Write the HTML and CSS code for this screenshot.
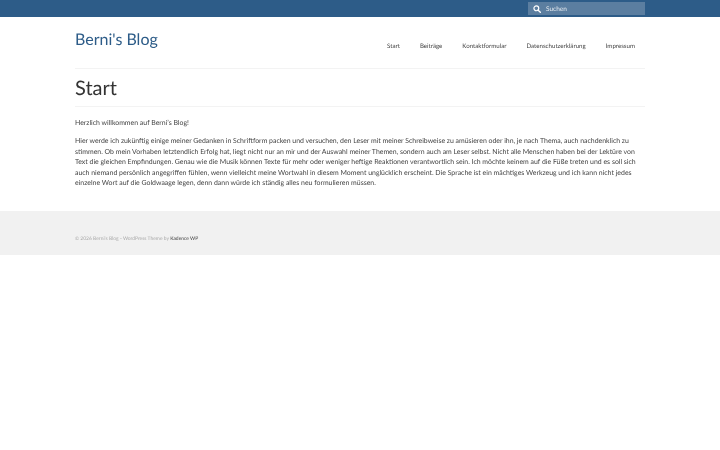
FILE: index.html
```html
<!DOCTYPE html>
<html lang="de">
<head>
<meta charset="utf-8">
<title>Berni's Blog</title>
<link rel="stylesheet" href="styles.css">
</head>
<body>
<div class="topbar">
  <div class="container topbar-inner">
    <form class="search">
      <svg class="search-icon" viewBox="0 0 12 12" width="8" height="8"><circle cx="5" cy="5" r="3.6" fill="none" stroke="#fff" stroke-width="1.8"/><path d="M7.8 7.8 11 11" stroke="#fff" stroke-width="2" stroke-linecap="round"/></svg>
      <span class="search-text">Suchen</span>
    </form>
  </div>
</div>
<header class="header">
  <div class="container header-inner">
    <a class="brand">Berni's Blog</a>
    <nav class="nav">
      <a>Start</a><a>Beiträge</a><a>Kontaktformular</a><a>Datenschutzerklärung</a><a>Impressum</a>
    </nav>
  </div>
</header>
<main class="container">
  <div class="title-wrap"><h1>Start</h1></div>
  <p>Herzlich willkommen auf Berni’s Blog!</p>
  <p>Hier werde ich zukünftig einige meiner Gedanken in Schriftform packen und versuchen, den Leser mit meiner Schreibweise zu amüsieren oder ihn, je nach Thema, auch nachdenklich zu stimmen. Ob mein Vorhaben letztendlich Erfolg hat, liegt nicht nur an mir und der Auswahl meiner Themen, sondern auch am Leser selbst. Nicht alle Menschen haben bei der Lektüre von Text die gleichen Empfindungen. Genau wie die Musik können Texte für mehr oder weniger heftige Reaktionen verantwortlich sein. Ich möchte keinem auf die Füße treten und es soll sich auch niemand persönlich angegriffen fühlen, wenn vielleicht meine Wortwahl in diesem Moment unglücklich erscheint. Die Sprache ist ein mächtiges Werkzeug und ich kann nicht jedes einzelne Wort auf die Goldwaage legen, denn dann würde ich ständig alles neu formulieren müssen.</p>
</main>
<footer class="footer">
  <div class="container footer-inner">© 2026 Berni's Blog - WordPress Theme by <a>Kadence WP</a></div>
</footer>
</body>
</html>
```
FILE: styles.css
```css
* { box-sizing: border-box; }
html, body { margin: 0; padding: 0; background: #fff; }
body { font-family: Lato, sans-serif; font-size: 6.93px; line-height: 10.5px; color: #444; text-rendering: geometricPrecision; }
.container { width: 570px; margin: 0 auto; will-change: transform; }
.topbar { background: #2d5c88; height: 16.5px; }
.topbar-inner { display: flex; justify-content: flex-end; }
.search { width: 117px; height: 13px; margin-top: 2px; background: #5b7ea0; display: flex; align-items: center; padding-left: 5px; gap: 5px; }
.search-text { color: #e6ebf0; font-size: 6.5px; line-height: 13px; padding-top: 1px; }
.search-icon { flex: none; }
.header-inner { display: flex; justify-content: space-between; height: 52px; border-bottom: 1px solid #f3f3f3; }
.brand { font-size: 16px; line-height: 24px; color: #2d5c88; margin-top: 10.5px; }
.nav { display: flex; margin-top: 25px; font-size: 6.15px; line-height: 10px; color: #444; }
.nav a { padding: 0 10px; }
.title-wrap { height: 38px; border-bottom: 1px solid #f3f3f3; margin-bottom: 11px; }
h1 { margin: 0; font-weight: 400; font-size: 20px; line-height: 38px; color: #333; }
p { margin: 0 0 7.5px; }
main { height: 142px; }
.footer { background: #f1f1f1; height: 44px; }
.footer-inner { padding-top: 23.5px; font-size: 4.95px; line-height: 8px; color: #aaa; }
.footer a { color: #444; }
```
